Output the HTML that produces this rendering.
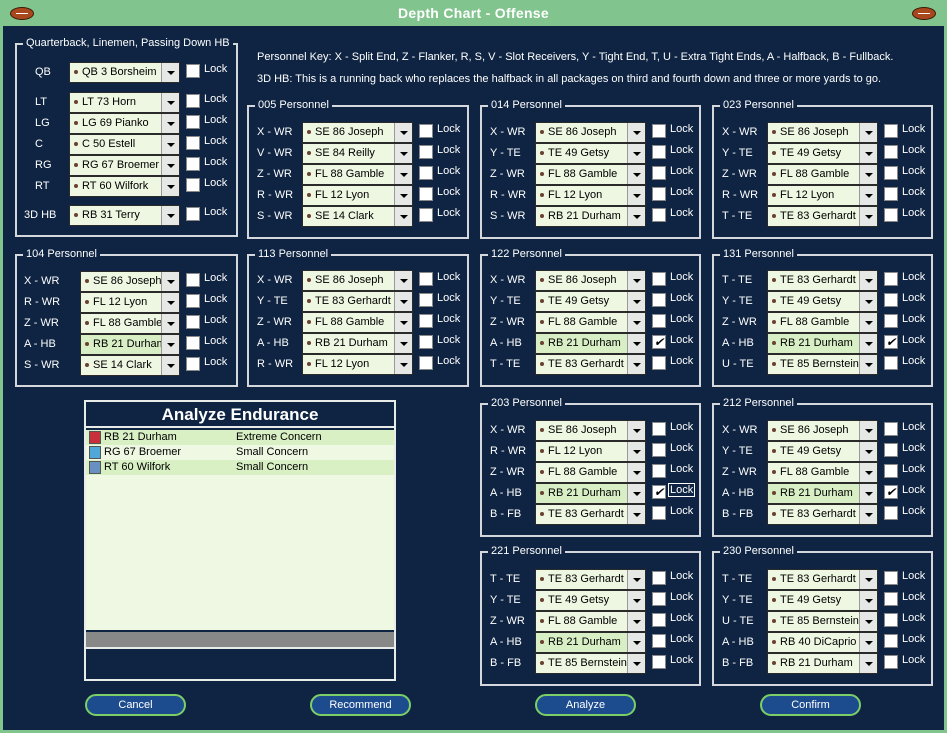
<!DOCTYPE html>
<html><head><meta charset="utf-8"><style>
*{box-sizing:border-box;margin:0;padding:0}
body{width:947px;height:733px;background:#82c48e;font-family:"Liberation Sans",sans-serif;font-size:11px;color:#fff;position:relative;overflow:hidden}
#main{position:absolute;left:3px;top:26px;width:941px;height:704px;background:#0e2442}
.title{position:absolute;left:0;top:5px;width:947px;text-align:center;font-size:14px;font-weight:bold;color:#fff;letter-spacing:.3px}
.ball{position:absolute;top:7px;width:24px;height:13px;border-radius:50%;background:#a8481c;border:1px solid #3a1a08}
.ball:after{content:"";position:absolute;left:5px;right:5px;top:5px;height:1px;background:#fff}
.box{position:absolute;border:2px solid #d4d8dc}
.lg{position:absolute;top:-8px;left:6px;background:#0e2442;padding:0 3px;white-space:nowrap}
.row{position:absolute;left:0;height:21px;width:100%}
.l{position:absolute;top:4px}
.dd{position:absolute;top:0;width:111px;height:21px;background:#eef7e2;border:1px solid #2a2a2a;color:#000;padding:3px 0 0 12px;border-right:none;white-space:nowrap;overflow:hidden}
.dd.g{background:#d8efc6}
.dd:before{content:"";position:absolute;left:4px;top:7px;width:4px;height:4px;border-radius:50%;background:#6a4030}
.dd:after{content:"";position:absolute;right:0;top:0;width:17px;height:19px;background:#e6e8e6;border-left:1px solid #999;border-right:1px solid #2a2a2a}
.ar{position:absolute;right:5px;top:8px;width:0;height:0;border-left:4px solid transparent;border-right:4px solid transparent;border-top:4px solid #000;z-index:2}
.cb{position:absolute;top:2px;width:14px;height:14px;background:#fff;border:1px solid #888;color:#000;font-size:12px;line-height:12px;text-align:center}
.lk{position:absolute;top:1px}
.p .l{left:8px}.p .dd{left:53px}.p .cb{left:170px}.p .lk{left:188px}
.q .l{left:7px}.q .dd{left:63px;width:100px}.q .cb{left:169px}.q .lk{left:187px}
.btn{position:absolute;top:694px;width:101px;height:22px;border:2px solid #7ccf66;border-radius:11px;background:#1d4c8e;text-align:center;line-height:18px;color:#fff}
</style></head><body>
<div class="ball" style="left:10px"></div><div class="ball" style="left:912px"></div>
<div class="title">Depth Chart - Offense</div>
<div id="main"></div>

<div style="position:absolute;left:257px;top:51px">Personnel Key: X - Split End, Z - Flanker, R, S, V - Slot Receivers, Y - Tight End, T, U - Extra Tight Ends, A - Halfback, B - Fullback.</div>
<div style="position:absolute;left:257px;top:73px">3D HB: This is a running back who replaces the halfback in all packages on third and fourth down and three or more yards to go.</div>

<!-- group 1 -->
<div class="box q" style="left:15px;top:43px;width:223px;height:194px">
<span class="lg">Quarterback, Linemen, Passing Down HB</span>
<div class="row" style="top:17px"><span class="l" style="left:18px">QB</span><div class="dd" style="left:52px;width:111px">QB 3 Borsheim<i class="ar"></i></div><i class="cb"></i><span class="lk">Lock</span></div>
<div class="row" style="top:47px"><span class="l" style="left:18px">LT</span><div class="dd" style="left:52px;width:111px">LT 73 Horn<i class="ar"></i></div><i class="cb"></i><span class="lk">Lock</span></div>
<div class="row" style="top:68px"><span class="l" style="left:18px">LG</span><div class="dd" style="left:52px;width:111px">LG 69 Pianko<i class="ar"></i></div><i class="cb"></i><span class="lk">Lock</span></div>
<div class="row" style="top:89px"><span class="l" style="left:18px">C</span><div class="dd" style="left:52px;width:111px">C 50 Estell<i class="ar"></i></div><i class="cb"></i><span class="lk">Lock</span></div>
<div class="row" style="top:110px"><span class="l" style="left:18px">RG</span><div class="dd" style="left:52px;width:111px">RG 67 Broemer<i class="ar"></i></div><i class="cb"></i><span class="lk">Lock</span></div>
<div class="row" style="top:131px"><span class="l" style="left:18px">RT</span><div class="dd" style="left:52px;width:111px">RT 60 Wilfork<i class="ar"></i></div><i class="cb"></i><span class="lk">Lock</span></div>
<div class="row" style="top:160px"><span class="l" style="left:7px">3D HB</span><div class="dd" style="left:52px;width:111px">RB 31 Terry<i class="ar"></i></div><i class="cb"></i><span class="lk">Lock</span></div>
</div>

<!-- 104 -->
<div class="box q" style="left:15px;top:254px;width:223px;height:133px">
<span class="lg">104 Personnel</span>
<div class="row" style="top:15px"><span class="l">X - WR</span><div class="dd">SE 86 Joseph<i class="ar"></i></div><i class="cb"></i><span class="lk">Lock</span></div>
<div class="row" style="top:36px"><span class="l">R - WR</span><div class="dd">FL 12 Lyon<i class="ar"></i></div><i class="cb"></i><span class="lk">Lock</span></div>
<div class="row" style="top:57px"><span class="l">Z - WR</span><div class="dd">FL 88 Gamble<i class="ar"></i></div><i class="cb"></i><span class="lk">Lock</span></div>
<div class="row" style="top:78px"><span class="l">A - HB</span><div class="dd g">RB 21 Durham<i class="ar"></i></div><i class="cb"></i><span class="lk">Lock</span></div>
<div class="row" style="top:99px"><span class="l">S - WR</span><div class="dd">SE 14 Clark<i class="ar"></i></div><i class="cb"></i><span class="lk">Lock</span></div>
</div>

<!-- 005 -->
<div class="box p" style="left:247px;top:105px;width:222px;height:134px"><span class="lg">005 Personnel</span>
<div class="row" style="top:15px"><span class="l">X - WR</span><div class="dd">SE 86 Joseph<i class="ar"></i></div><i class="cb"></i><span class="lk">Lock</span></div>
<div class="row" style="top:36px"><span class="l">V - WR</span><div class="dd">SE 84 Reilly<i class="ar"></i></div><i class="cb"></i><span class="lk">Lock</span></div>
<div class="row" style="top:57px"><span class="l">Z - WR</span><div class="dd">FL 88 Gamble<i class="ar"></i></div><i class="cb"></i><span class="lk">Lock</span></div>
<div class="row" style="top:78px"><span class="l">R - WR</span><div class="dd">FL 12 Lyon<i class="ar"></i></div><i class="cb"></i><span class="lk">Lock</span></div>
<div class="row" style="top:99px"><span class="l">S - WR</span><div class="dd">SE 14 Clark<i class="ar"></i></div><i class="cb"></i><span class="lk">Lock</span></div>
</div>
<!-- 014 -->
<div class="box p" style="left:480px;top:105px;width:221px;height:134px"><span class="lg">014 Personnel</span>
<div class="row" style="top:15px"><span class="l">X - WR</span><div class="dd">SE 86 Joseph<i class="ar"></i></div><i class="cb"></i><span class="lk">Lock</span></div>
<div class="row" style="top:36px"><span class="l">Y - TE</span><div class="dd">TE 49 Getsy<i class="ar"></i></div><i class="cb"></i><span class="lk">Lock</span></div>
<div class="row" style="top:57px"><span class="l">Z - WR</span><div class="dd">FL 88 Gamble<i class="ar"></i></div><i class="cb"></i><span class="lk">Lock</span></div>
<div class="row" style="top:78px"><span class="l">R - WR</span><div class="dd">FL 12 Lyon<i class="ar"></i></div><i class="cb"></i><span class="lk">Lock</span></div>
<div class="row" style="top:99px"><span class="l">S - WR</span><div class="dd">RB 21 Durham<i class="ar"></i></div><i class="cb"></i><span class="lk">Lock</span></div>
</div>
<!-- 023 -->
<div class="box p" style="left:712px;top:105px;width:221px;height:134px"><span class="lg">023 Personnel</span>
<div class="row" style="top:15px"><span class="l">X - WR</span><div class="dd">SE 86 Joseph<i class="ar"></i></div><i class="cb"></i><span class="lk">Lock</span></div>
<div class="row" style="top:36px"><span class="l">Y - TE</span><div class="dd">TE 49 Getsy<i class="ar"></i></div><i class="cb"></i><span class="lk">Lock</span></div>
<div class="row" style="top:57px"><span class="l">Z - WR</span><div class="dd">FL 88 Gamble<i class="ar"></i></div><i class="cb"></i><span class="lk">Lock</span></div>
<div class="row" style="top:78px"><span class="l">R - WR</span><div class="dd">FL 12 Lyon<i class="ar"></i></div><i class="cb"></i><span class="lk">Lock</span></div>
<div class="row" style="top:99px"><span class="l">T - TE</span><div class="dd">TE 83 Gerhardt<i class="ar"></i></div><i class="cb"></i><span class="lk">Lock</span></div>
</div>

<!-- 113 -->
<div class="box p" style="left:247px;top:254px;width:222px;height:133px"><span class="lg">113 Personnel</span>
<div class="row" style="top:14px"><span class="l">X - WR</span><div class="dd">SE 86 Joseph<i class="ar"></i></div><i class="cb"></i><span class="lk">Lock</span></div>
<div class="row" style="top:35px"><span class="l">Y - TE</span><div class="dd">TE 83 Gerhardt<i class="ar"></i></div><i class="cb"></i><span class="lk">Lock</span></div>
<div class="row" style="top:56px"><span class="l">Z - WR</span><div class="dd">FL 88 Gamble<i class="ar"></i></div><i class="cb"></i><span class="lk">Lock</span></div>
<div class="row" style="top:77px"><span class="l">A - HB</span><div class="dd">RB 21 Durham<i class="ar"></i></div><i class="cb"></i><span class="lk">Lock</span></div>
<div class="row" style="top:98px"><span class="l">R - WR</span><div class="dd">FL 12 Lyon<i class="ar"></i></div><i class="cb"></i><span class="lk">Lock</span></div>
</div>
<!-- 122 -->
<div class="box p" style="left:480px;top:254px;width:221px;height:133px"><span class="lg">122 Personnel</span>
<div class="row" style="top:14px"><span class="l">X - WR</span><div class="dd">SE 86 Joseph<i class="ar"></i></div><i class="cb"></i><span class="lk">Lock</span></div>
<div class="row" style="top:35px"><span class="l">Y - TE</span><div class="dd">TE 49 Getsy<i class="ar"></i></div><i class="cb"></i><span class="lk">Lock</span></div>
<div class="row" style="top:56px"><span class="l">Z - WR</span><div class="dd">FL 88 Gamble<i class="ar"></i></div><i class="cb"></i><span class="lk">Lock</span></div>
<div class="row" style="top:77px"><span class="l">A - HB</span><div class="dd g">RB 21 Durham<i class="ar"></i></div><i class="cb">✔</i><span class="lk">Lock</span></div>
<div class="row" style="top:98px"><span class="l">T - TE</span><div class="dd">TE 83 Gerhardt<i class="ar"></i></div><i class="cb"></i><span class="lk">Lock</span></div>
</div>
<!-- 131 -->
<div class="box p" style="left:712px;top:254px;width:221px;height:133px"><span class="lg">131 Personnel</span>
<div class="row" style="top:14px"><span class="l">T - TE</span><div class="dd">TE 83 Gerhardt<i class="ar"></i></div><i class="cb"></i><span class="lk">Lock</span></div>
<div class="row" style="top:35px"><span class="l">Y - TE</span><div class="dd">TE 49 Getsy<i class="ar"></i></div><i class="cb"></i><span class="lk">Lock</span></div>
<div class="row" style="top:56px"><span class="l">Z - WR</span><div class="dd">FL 88 Gamble<i class="ar"></i></div><i class="cb"></i><span class="lk">Lock</span></div>
<div class="row" style="top:77px"><span class="l">A - HB</span><div class="dd g">RB 21 Durham<i class="ar"></i></div><i class="cb">✔</i><span class="lk">Lock</span></div>
<div class="row" style="top:98px"><span class="l">U - TE</span><div class="dd">TE 85 Bernstein<i class="ar"></i></div><i class="cb"></i><span class="lk">Lock</span></div>
</div>

<!-- 203 -->
<div class="box p" style="left:480px;top:403px;width:221px;height:134px"><span class="lg">203 Personnel</span>
<div class="row" style="top:15px"><span class="l">X - WR</span><div class="dd">SE 86 Joseph<i class="ar"></i></div><i class="cb"></i><span class="lk">Lock</span></div>
<div class="row" style="top:36px"><span class="l">R - WR</span><div class="dd">FL 12 Lyon<i class="ar"></i></div><i class="cb"></i><span class="lk">Lock</span></div>
<div class="row" style="top:57px"><span class="l">Z - WR</span><div class="dd">FL 88 Gamble<i class="ar"></i></div><i class="cb"></i><span class="lk">Lock</span></div>
<div class="row" style="top:78px"><span class="l">A - HB</span><div class="dd g">RB 21 Durham<i class="ar"></i></div><i class="cb">✔</i><span class="lk" style="border:1px solid #fff;padding:0 1px;left:186px;top:0">Lock</span></div>
<div class="row" style="top:99px"><span class="l">B - FB</span><div class="dd">TE 83 Gerhardt<i class="ar"></i></div><i class="cb"></i><span class="lk">Lock</span></div>
</div>
<!-- 212 -->
<div class="box p" style="left:712px;top:403px;width:221px;height:134px"><span class="lg">212 Personnel</span>
<div class="row" style="top:15px"><span class="l">X - WR</span><div class="dd">SE 86 Joseph<i class="ar"></i></div><i class="cb"></i><span class="lk">Lock</span></div>
<div class="row" style="top:36px"><span class="l">Y - TE</span><div class="dd">TE 49 Getsy<i class="ar"></i></div><i class="cb"></i><span class="lk">Lock</span></div>
<div class="row" style="top:57px"><span class="l">Z - WR</span><div class="dd">FL 88 Gamble<i class="ar"></i></div><i class="cb"></i><span class="lk">Lock</span></div>
<div class="row" style="top:78px"><span class="l">A - HB</span><div class="dd g">RB 21 Durham<i class="ar"></i></div><i class="cb">✔</i><span class="lk">Lock</span></div>
<div class="row" style="top:99px"><span class="l">B - FB</span><div class="dd">TE 83 Gerhardt<i class="ar"></i></div><i class="cb"></i><span class="lk">Lock</span></div>
</div>

<!-- 221 -->
<div class="box p" style="left:480px;top:551px;width:221px;height:135px"><span class="lg">221 Personnel</span>
<div class="row" style="top:16px"><span class="l">T - TE</span><div class="dd">TE 83 Gerhardt<i class="ar"></i></div><i class="cb"></i><span class="lk">Lock</span></div>
<div class="row" style="top:37px"><span class="l">Y - TE</span><div class="dd">TE 49 Getsy<i class="ar"></i></div><i class="cb"></i><span class="lk">Lock</span></div>
<div class="row" style="top:58px"><span class="l">Z - WR</span><div class="dd">FL 88 Gamble<i class="ar"></i></div><i class="cb"></i><span class="lk">Lock</span></div>
<div class="row" style="top:79px"><span class="l">A - HB</span><div class="dd g">RB 21 Durham<i class="ar"></i></div><i class="cb"></i><span class="lk">Lock</span></div>
<div class="row" style="top:100px"><span class="l">B - FB</span><div class="dd">TE 85 Bernstein<i class="ar"></i></div><i class="cb"></i><span class="lk">Lock</span></div>
</div>
<!-- 230 -->
<div class="box p" style="left:712px;top:551px;width:221px;height:135px"><span class="lg">230 Personnel</span>
<div class="row" style="top:16px"><span class="l">T - TE</span><div class="dd">TE 83 Gerhardt<i class="ar"></i></div><i class="cb"></i><span class="lk">Lock</span></div>
<div class="row" style="top:37px"><span class="l">Y - TE</span><div class="dd">TE 49 Getsy<i class="ar"></i></div><i class="cb"></i><span class="lk">Lock</span></div>
<div class="row" style="top:58px"><span class="l">U - TE</span><div class="dd">TE 85 Bernstein<i class="ar"></i></div><i class="cb"></i><span class="lk">Lock</span></div>
<div class="row" style="top:79px"><span class="l">A - HB</span><div class="dd">RB 40 DiCaprio<i class="ar"></i></div><i class="cb"></i><span class="lk">Lock</span></div>
<div class="row" style="top:100px"><span class="l">B - FB</span><div class="dd">RB 21 Durham<i class="ar"></i></div><i class="cb"></i><span class="lk">Lock</span></div>
</div>

<!-- Analyze Endurance -->
<div style="position:absolute;left:84px;top:400px;width:312px;height:281px;border:2px solid #e8ece8;background:#0e2442">
 <div style="height:26px;text-align:center;font-size:17px;font-weight:bold;line-height:26px;border-bottom:2px solid #e8ece8">Analyze Endurance</div>
 <div style="position:absolute;left:0;top:28px;width:308px;height:200px;background:#eef8e2;color:#000">
  <div style="height:15px;background:#d8f0c4;position:relative"><i style="position:absolute;left:3px;top:1px;width:12px;height:13px;background:#c8303c;border:1px solid #555"></i><span style="position:absolute;left:18px;top:1px">RB 21 Durham</span><span style="position:absolute;left:150px;top:1px">Extreme Concern</span></div>
  <div style="height:15px;position:relative"><i style="position:absolute;left:3px;top:1px;width:12px;height:13px;background:#50a8d8;border:1px solid #555"></i><span style="position:absolute;left:18px;top:1px">RG 67 Broemer</span><span style="position:absolute;left:150px;top:1px">Small Concern</span></div>
  <div style="height:15px;background:#d8f0c4;position:relative"><i style="position:absolute;left:3px;top:1px;width:12px;height:13px;background:#6890c0;border:1px solid #555"></i><span style="position:absolute;left:18px;top:1px">RT 60 Wilfork</span><span style="position:absolute;left:150px;top:1px">Small Concern</span></div>
 </div>
 <div style="position:absolute;left:0;top:230px;width:308px;height:17px;background:#888;border-bottom:2px solid #e8ece8"></div>
</div>

<div class="btn" style="left:85px">Cancel</div>
<div class="btn" style="left:310px">Recommend</div>
<div class="btn" style="left:535px">Analyze</div>
<div class="btn" style="left:760px">Confirm</div>
</body></html>
